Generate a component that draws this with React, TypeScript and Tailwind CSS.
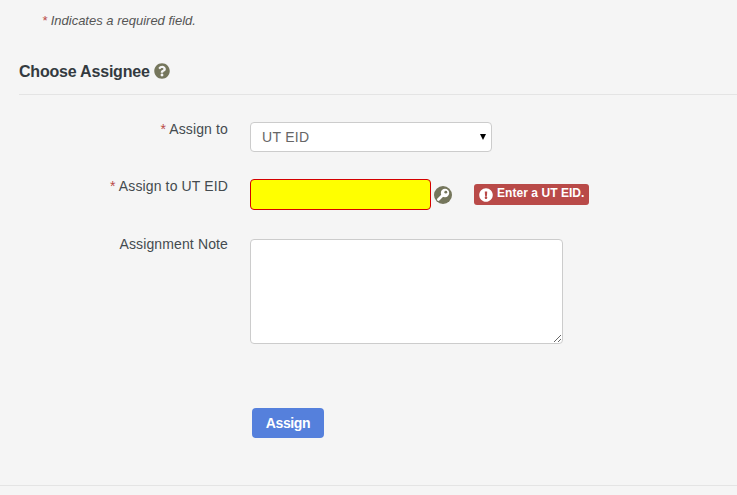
import React from "react";
import { FaQuestionCircle, FaExclamationCircle } from "react-icons/fa";

function KeyBadge() {
  return (
    <svg width="18" height="18" viewBox="0 0 18 18" className="shrink-0">
      <circle cx="9" cy="9" r="9" fill="#75765c" />
      <circle cx="11" cy="7" r="4.2" fill="#fff" />
      <circle cx="11.8" cy="6.2" r="1.4" fill="#75765c" />
      <path d="M8.4 9.6 L4.4 13.6" stroke="#fff" strokeWidth="2.8" strokeLinecap="round" />
    </svg>
  );
}

function Row({ label, required, children, className, labelClass }: { label: string; required?: boolean; children: React.ReactNode; className?: string; labelClass?: string }) {
  return (
    <div className={`flex items-start ${className ?? ""}`}>
      <label className={`w-[228px] shrink-0 text-right text-[14px] leading-[20px] tracking-[0.13px] text-[#444b4f] ${labelClass ?? ""}`}>
        {required && <span className="text-[#b94a48]">* </span>}
        {label}
      </label>
      <div className="ml-[22px] flex min-w-0 items-center">{children}</div>
    </div>
  );
}

export default function App() {
  return (
    <div className="h-[495px] w-[737px] overflow-hidden bg-[#f5f5f5] font-['Liberation_Sans',Arial,sans-serif]">
      <p className="pl-[42px] pt-[12px] text-[13px] italic leading-[17px] text-[#555]">
        <span className="text-[#b94a48]">* </span>Indicates a required field.
      </p>
      <div className="ml-[19px] mt-[33px] flex h-[33px] items-start gap-[4px] border-b border-[#e4e4e4]">
        <h2 className="text-[16px] font-bold leading-[20px] tracking-[-0.2px] text-[#333a3f]">Choose Assignee</h2>
        <FaQuestionCircle className="mt-[1px] text-[16px] text-[#75765c]" />
      </div>

      <Row label="Assign to" required className="mt-[27px]" labelClass="-mt-[3px]">
        <div className="relative">
          <select className="block h-[30px] w-[242px] appearance-none rounded-[4px] border border-[#ccc] bg-white pl-[11px] text-[14px] tracking-[0.3px] text-[#666]">
            <option>UT EID</option>
          </select>
          <span className="absolute right-[6px] top-[12px] h-0 w-0 border-x-[3.5px] border-t-[6px] border-x-transparent border-t-black" />
        </div>
      </Row>

      <Row label="Assign to UT EID" required className="mt-[27px]" labelClass="-mt-[3px]">
        <input className="h-[31px] w-[181px] rounded-[4px] border border-[#d40000] bg-[#ffff00]" />
        <span className="ml-[3px] mt-[1px] flex"><KeyBadge /></span>
        <span className="ml-[22px] flex h-[21px] items-center gap-[4px] rounded-[3px] bg-[#b94a48] px-[5px] text-[12px] font-bold text-white">
          <FaExclamationCircle className="text-[14px]" />
          <span className="-mt-[3px] tracking-[0.05px]">Enter a UT EID.</span>
        </span>
      </Row>

      <Row label="Assignment Note" className="mt-[29px]" labelClass="-mt-[5px]">
        <textarea className="block h-[105px] w-[313px] rounded-[4px] border border-[#ccc] bg-white" />
      </Row>

      <div className="ml-[252px] mt-[64px]">
        <button className="h-[30px] w-[72px] rounded-[4px] bg-[#5580dc] text-[14px] font-bold tracking-[-0.4px] text-white">Assign</button>
      </div>

      <div className="mt-[47px] border-t border-[#e4e4e4]" />
    </div>
  );
}
